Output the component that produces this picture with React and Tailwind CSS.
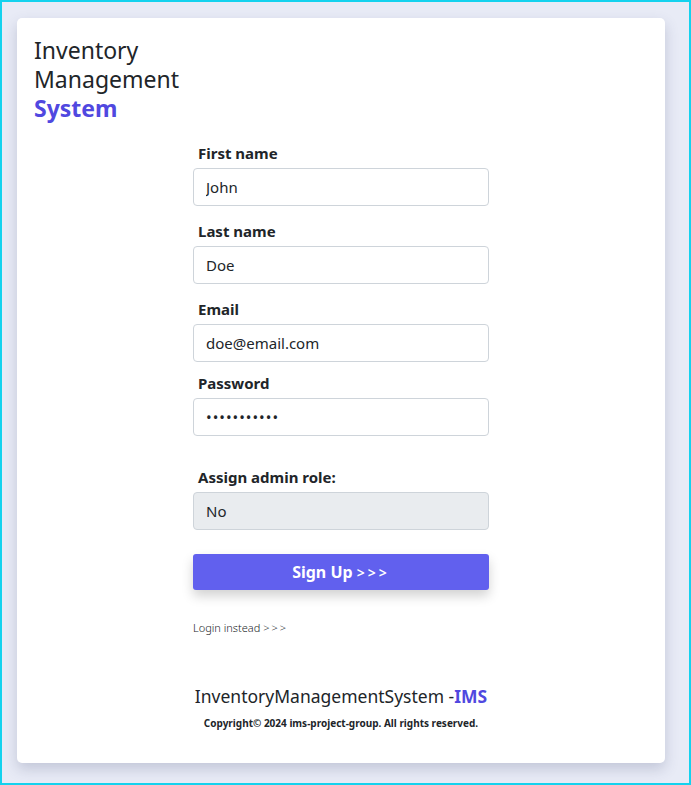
export default function App() {
    const font = { fontFamily: '"Noto Sans", "Open Sans", sans-serif' };

    return (
        <div className="w-[691px] h-[785px] border-2 border-[#14d2ee] bg-[#e8ebf6] pl-[15px] pt-4" style={font}>
            <div className="w-[648px] h-[745px] bg-white rounded-[5px] shadow-[0_6px_14px_rgba(60,70,110,0.22)] pt-[18px] px-[17px] flex flex-col">
                {/* Header */}
                <h1 className="text-[23px] leading-[29px] text-[#212529]">
                    Inventory<br />Management<br />
                    <span className="font-bold text-[#5048e0]">System</span>
                </h1>

                {/* Form */}
                <form className="w-[296px] mx-auto mt-[19px] flex flex-col">
                    <label className="pl-[5px] text-[15px] leading-[22px] font-bold text-[#212529] mb-1">First name</label>
                    <input
                        defaultValue="John"
                        className="h-[38px] px-3 border border-[#ced4da] rounded-[4px] text-[15px] text-[#212529] outline-none"
                    />

                    <label className="pl-[5px] text-[15px] leading-[22px] font-bold text-[#212529] mt-[14px] mb-1">Last name</label>
                    <input
                        defaultValue="Doe"
                        className="h-[38px] px-3 border border-[#ced4da] rounded-[4px] text-[15px] text-[#212529] outline-none"
                    />

                    <label className="pl-[5px] text-[15px] leading-[22px] font-bold text-[#212529] mt-[14px] mb-1">Email</label>
                    <input
                        defaultValue="doe@email.com"
                        className="h-[38px] px-3 border border-[#ced4da] rounded-[4px] text-[15px] text-[#212529] outline-none"
                    />

                    <label className="pl-[5px] text-[15px] leading-[22px] font-bold text-[#212529] mt-[10px] mb-1">Password</label>
                    <input
                        type="password"
                        defaultValue="password123"
                        className="h-[38px] px-3 border border-[#ced4da] rounded-[4px] text-[15px] tracking-[1px] text-[#212529] outline-none"
                    />

                    <label className="pl-[5px] text-[15px] leading-[22px] font-bold text-[#212529] mt-[30px] mb-1">Assign admin role:</label>
                    <div className="h-[38px] px-3 flex items-center bg-[#e9ecef] border border-[#ced4da] rounded-[4px] text-[15px] text-[#212529]">
                        No
                    </div>

                    <button
                        type="button"
                        className="mt-6 h-9 bg-[#6160ee] rounded-[3px] text-white font-bold text-[16px] shadow-[0_6px_12px_rgba(0,0,0,0.18)]"
                    >
                        Sign Up <span className="font-semibold text-[14px] tracking-[3px]">&gt;&gt;&gt;</span>
                    </button>

                    <p className="mt-[29px] text-[11px] leading-[18px] font-light text-[#212529]">
                        Login instead <span className="tracking-[2px]">&gt;&gt;&gt;</span>
                    </p>
                </form>

                {/* Footer */}
                <div className="mt-[46px] text-center">
                    <p className="text-[17.5px] leading-[27px] text-[#212529]">
                        InventoryManagementSystem -<span className="font-bold text-[#5048e0]">IMS</span>
                    </p>
                    <p className="mt-[6px] text-[10px] leading-[15px] font-bold text-[#212529]">
                        Copyright© 2024 ims-project-group. All rights reserved.
                    </p>
                </div>
            </div>
        </div>
    );
}
